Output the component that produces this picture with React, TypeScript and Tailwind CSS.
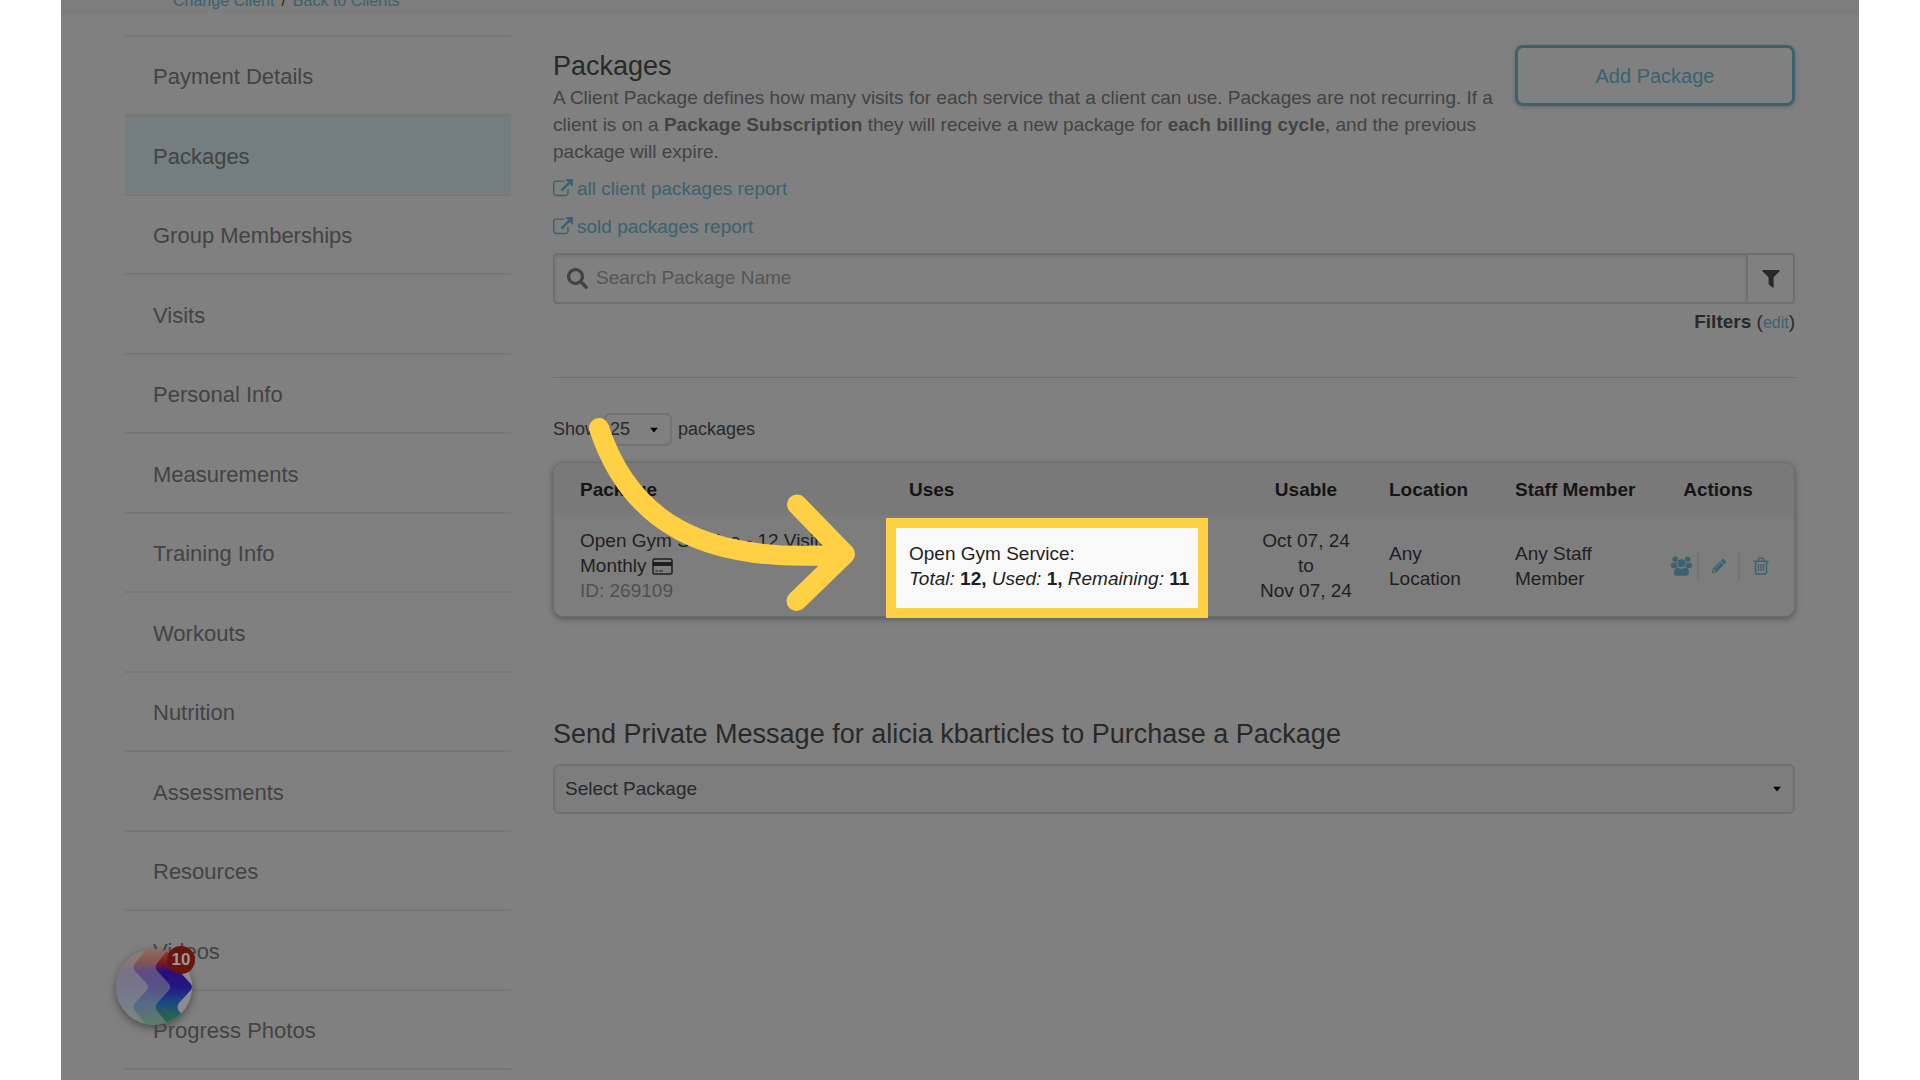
import type { ReactNode } from 'react';
import { FaPencilAlt, FaSearch } from 'react-icons/fa';

const menuItems = [
  'Payment Details',
  'Packages',
  'Group Memberships',
  'Visits',
  'Personal Info',
  'Measurements',
  'Training Info',
  'Workouts',
  'Nutrition',
  'Assessments',
  'Resources',
  'Videos',
  'Progress Photos',
];

function ExternalLinkIcon() {
  return (
    <svg viewBox="0 0 1792 1792" className="size-5 shrink-0" fill="currentColor" aria-hidden="true">
      <path d="M1408 928v320q0 119-84.5 203.5t-203.5 84.5h-832q-119 0-203.5-84.5t-84.5-203.5v-832q0-119 84.5-203.5t203.5-84.5h704q14 0 23 9t9 23v64q0 14-9 23t-23 9h-704q-66 0-113 47t-47 113v832q0 66 47 113t113 47h832q66 0 113-47t47-113v-320q0-14 9-23t23-9h64q14 0 23 9t9 23zm384-864v512q0 26-19 45t-45 19-45-19l-176-176-652 652q-10 10-23 10t-23-10l-114-114q-10-10-10-23t10-23l652-652-176-176q-19-19-19-45t19-45 45-19h512q26 0 45 19t19 45z" />
    </svg>
  );
}

function FilterIcon() {
  return (
    <svg viewBox="0 0 18 18" className="size-[18px]" fill="currentColor" aria-hidden="true">
      <path d="M.8 0h16.4q1 .4.4 1.3L11.6 7.300V17q-.3 1-1.200.5L6.600 14.300V7.300L.4 1.300Q-.1.4.8 0z" />
    </svg>
  );
}

function CardIcon() {
  return (
    <svg viewBox="0 0 21 17" className="inline-block h-[17px] w-[21px] align-[-3px]" fill="none" aria-label="Paid by card">
      <rect x="1" y="1" width="19" height="15" rx="1.500" stroke="currentColor" strokeWidth="1.500" />
      <path d="M1 4h19v4H1z" fill="currentColor" />
      <path d="M3.500 13h2.500M7 13h4" stroke="currentColor" strokeWidth="1.200" />
    </svg>
  );
}

function UsersIcon() {
  return (
    <svg viewBox="0 0 21 20" className="h-5 w-[21px]" fill="currentColor" aria-hidden="true">
      <circle cx="4.200" cy="3.200" r="2.700" />
      <circle cx="16.800" cy="3.200" r="2.700" />
      <circle cx="10.500" cy="7.200" r="4" />
      <path d="M1.800 6.400q2.400 1.200 4 .2-.4 2.700 1.200 4.400-1.600 0-2.600 1H2Q0 12 0 10q0-3.300 1.800-3.600zM19.200 6.400q-2.400 1.200-4 .2.4 2.700-1.200 4.400 1.600 0 2.600 1H19q2 0 2-2 0-3.300-1.800-3.600z" />
      <path d="M6.500 11.400q4 2.600 8 0Q18 11.500 18 17q0 2.700-2.700 2.700H5.700Q3 19.700 3 17q0-5.500 3.500-5.600z" />
    </svg>
  );
}

function TrashIcon() {
  return (
    <svg viewBox="0 0 16 18" className="h-[18px] w-4" fill="none" stroke="currentColor" aria-hidden="true">
      <path d="M.5 4.200h15M2.500 4.200v11q0 1.800 1.800 1.800h7.400q1.800 0 1.800-1.800v-11" strokeWidth="1.500" />
      <path d="M4.700 4L6 1.200h4L11.300 4M5.500 7v7M8 7v7M10.500 7v7" strokeWidth="1.300" />
    </svg>
  );
}

function Caret() {
  return (
    <svg viewBox="0 0 8 5" className="pointer-events-none absolute right-3.5 top-1/2 h-[5px] w-2 -translate-y-1/2" aria-hidden="true">
      <path d="M0 0h8L4 5z" fill="#000" />
    </svg>
  );
}

function ReportLink({ children }: { children: ReactNode }) {
  return (
    <a href="#" className="flex h-[38px] w-fit items-center gap-1 text-[#3a6270]">
      <ExternalLinkIcon />
      {children}
    </a>
  );
}

function Sidebar() {
  return (
    <nav className="mt-[21px] w-[386px] shrink-0">
      <ul className="border-t-2 border-[#777]">
        {menuItems.map((item) => (
          <li key={item} className="border-b-2 border-[#777] odd:h-[79px] even:h-20">
            <a
              href="#"
              className={
                item === 'Packages'
                  ? 'flex h-full items-center bg-[#747d7f] px-7 pt-0.5 text-[22px] text-[#434343]'
                  : 'flex h-full items-center px-7 pt-0.5 text-[22px] text-[#434343]'
              }>
              {item}
            </a>
          </li>
        ))}
      </ul>
    </nav>
  );
}

function PackageTable() {
  return (
    <div className="relative mt-4">
      <div className="rounded-[10px] border border-[#6c6d6e] bg-[#7d7d7d] shadow-[0_2px_6px_#50585e]">
        <table className="w-full table-fixed text-left text-[19px] leading-[25px] text-[#1f1f1f]">
          <colgroup>
            <col />
            <col className="w-[344px]" />
            <col className="w-[136px]" />
            <col className="w-[126px]" />
            <col className="w-[142px]" />
            <col className="w-[152px]" />
          </colgroup>
          <thead className="bg-[#797979] text-[#151515]">
            <tr className="h-[52px]">
              <th className="rounded-tl-[10px] pl-[26px]">Package</th>
              <th className="pl-[15px]">Uses</th>
              <th className="text-center">Usable</th>
              <th className="pl-[15px]">Location</th>
              <th className="pl-[15px]">Staff Member</th>
              <th className="rounded-tr-[10px] text-center">Actions</th>
            </tr>
          </thead>
          <tbody>
            <tr className="h-[101px]">
              <td className="pl-[26px]">
                Open Gym Service - 12 Visits
                <br />
                Monthly <CardIcon />
                <br />
                <span className="text-[#505050]">ID: 269109</span>
              </td>
              <td className="relative pl-[15px]">
                <div className="absolute -left-2 top-[3px] flex h-[100px] w-[322px] flex-col justify-center border-[10px] border-[#ffd043] bg-[#f9f9f9] pb-1 pl-[13px]">
                  <p>Open Gym Service:</p>
                  <p className="whitespace-nowrap">
                    <i>Total:</i> <b>12,</b> <i>Used:</i> <b>1,</b> <i>Remaining:</i> <b>11</b>
                  </p>
                </div>
              </td>
              <td className="text-center">
                Oct 07, 24
                <br />
                to
                <br />
                Nov 07, 24
              </td>
              <td className="pl-[15px]">
                Any
                <br />
                Location
              </td>
              <td className="pl-[15px]">
                Any Staff
                <br />
                Member
              </td>
              <td>
                <div className="flex items-center pl-[25px] text-[#3a6270]">
                  <button aria-label="Share package" className="flex h-7 w-8 items-center border-r-2 border-[#747474] pl-1">
                    <UsersIcon />
                  </button>
                  <button aria-label="Edit package" className="flex h-7 w-[41px] items-center justify-center border-r-2 border-[#747474]">
                    <FaPencilAlt className="size-3.5" />
                  </button>
                  <button aria-label="Delete package" className="flex h-7 w-[42px] items-center justify-center">
                    <TrashIcon />
                  </button>
                </div>
              </td>
            </tr>
          </tbody>
        </table>
      </div>
      <svg
        viewBox="0 0 268 194"
        className="pointer-events-none absolute -top-[45px] left-[35px] h-[194px] w-[268px]"
        fill="none"
        stroke="#ffd043"
        strokeWidth="20"
        strokeLinecap="round"
        strokeLinejoin="round"
        aria-hidden="true">
        <path d="M11 11C41 102 112 149 257 137M209 87.500L257 137L208.500 184" />
      </svg>
    </div>
  );
}

function ChatBubble() {
  return (
    <button aria-label="Open messages, 10 unread" className="absolute left-[55px] top-[949px] size-[76px] rounded-full shadow-[0_3px_8px_#4a4a4a]">
      <svg viewBox="0 0 76 76" className="size-full" aria-hidden="true">
        <defs>
          <linearGradient id="wave" gradientUnits="userSpaceOnUse" x1="0" y1="0" x2="0" y2="76">
            <stop offset="0" stopColor="#8c4a38" />
            <stop offset=".17" stopColor="#7d1c1a" />
            <stop offset=".3" stopColor="#2b0d7c" />
            <stop offset=".5" stopColor="#221784" />
            <stop offset=".7" stopColor="#1d4783" />
            <stop offset=".85" stopColor="#255e5b" />
            <stop offset="1" stopColor="#2a6c40" />
          </linearGradient>
          <clipPath id="bubble">
            <circle cx="38" cy="38" r="38" />
          </clipPath>
        </defs>
        <g clipPath="url(#bubble)">
          <path d="M0 0h76v76H0z" fill="#8c8c8c" />
          <path d="M-4-2H32L19 14Q16 18 19 22L30 34Q34 38 30 42L19 54Q16 58 19 62L32 78H-4z" fill="url(#wave)" opacity=".2" />
          <path d="M32-2H54L41 14Q38 18 41 22L52 34Q56 38 52 42L41 54Q38 58 41 62L54 78H32L19 62Q16 58 19 54L30 42Q34 38 30 34L19 22Q16 18 19 14z" fill="url(#wave)" opacity=".5" />
          <path d="M54-2H76L63 14Q60 18 63 22L74 34Q78 38 74 42L63 54Q60 58 63 62L76 78H54L41 62Q38 58 41 54L52 42Q56 38 52 34L41 22Q38 18 41 14z" fill="url(#wave)" />
        </g>
      </svg>
      <span className="absolute -right-[3px] -top-[3px] flex size-7 items-center justify-center rounded-full bg-[#68150e] text-[17px] font-bold text-[#999]">
        10
      </span>
    </button>
  );
}

export default function App() {
  return (
    <div className="min-h-screen bg-white px-[61px] font-['Liberation_Sans',Arial,sans-serif]">
      <div className="relative min-h-screen bg-[#808080]">
        <header className="flex h-3.5 items-end gap-[7px] overflow-hidden bg-[#7d7d7d] pb-[3px] pl-28 text-base leading-5 text-[#222]">
          <a href="#" className="text-[#3a6270]">Change Client</a>
          <span>/</span>
          <a href="#" className="text-[#3a6270]">Back to Clients</a>
        </header>

        <div className="flex gap-[42px] px-16">
          <Sidebar />

          <main className="min-w-0 flex-1 text-[19px] text-[#292929]">
            <section className="flex gap-4 pt-[31px]">
              <div className="flex-1">
                <h1 className="mt-[3px] text-[27px] leading-9">Packages</h1>
                <p className="leading-[27px] text-[#434343]">
                  A Client Package defines how many visits for each service that a client can use. Packages are not recurring. If a
                  client is on a <b>Package Subscription</b> they will receive a new package for <b>each billing cycle</b>, and the
                  previous package will expire.
                </p>
              </div>
              <button className="h-[61px] w-[280px] shrink-0 rounded-lg border-[3px] border-[#3a6270] text-xl text-[#3a6270] shadow-[0_1px_4px_#666]">
                Add Package
              </button>
            </section>

            <div className="mt-[5px]">
              <ReportLink>all client packages report</ReportLink>
              <ReportLink>sold packages report</ReportLink>
            </div>

            <div className="mt-[7px] flex h-[51px] rounded border-2 border-[#6f6f6f]">
              <label className="flex flex-1 items-center gap-2 pl-3 text-[#434343] shadow-[inset_0_2px_3px_#737373]">
                <FaSearch className="size-[21px]" aria-label="Search" />
                <input type="text" placeholder="Search Package Name" className="w-full flex-1 bg-transparent outline-none placeholder:text-[#565656]" />
              </label>
              <button aria-label="Filter packages" className="flex w-[47px] items-center justify-center border-l-2 border-[#6f6f6f]">
                <FilterIcon />
              </button>
            </div>

            <p className="mt-[5px] text-right leading-[26px]">
              <b>Filters</b> (<a href="#" className="text-base text-[#3a6270]">edit</a>)
            </p>

            <hr className="mt-[42px] border-[#6d6d6d]" />

            <div className="mt-[35px] flex h-[33px] items-center gap-1.5 text-[18px]">
              <label htmlFor="page-size">Show</label>
              <span className="relative">
                <select id="page-size" className="h-[33px] w-[68px] appearance-none rounded-md border-2 border-[#737373] pl-1">
                  <option>25</option>
                  <option>50</option>
                </select>
                <Caret />
              </span>
              <span>packages</span>
            </div>

            <PackageTable />

            <section className="mt-[99px]">
              <h2 className="text-[27px] leading-9">
                <label htmlFor="send-package">Send Private Message for alicia kbarticles to Purchase a Package</label>
              </h2>
              <div className="relative mt-3">
                <select id="send-package" className="h-[50px] w-full appearance-none rounded-md border-2 border-[#717171] bg-[#7d7d7d] px-2.5">
                  <option>Select Package</option>
                </select>
                <Caret />
              </div>
            </section>
          </main>
        </div>

        <ChatBubble />
      </div>
    </div>
  );
}
